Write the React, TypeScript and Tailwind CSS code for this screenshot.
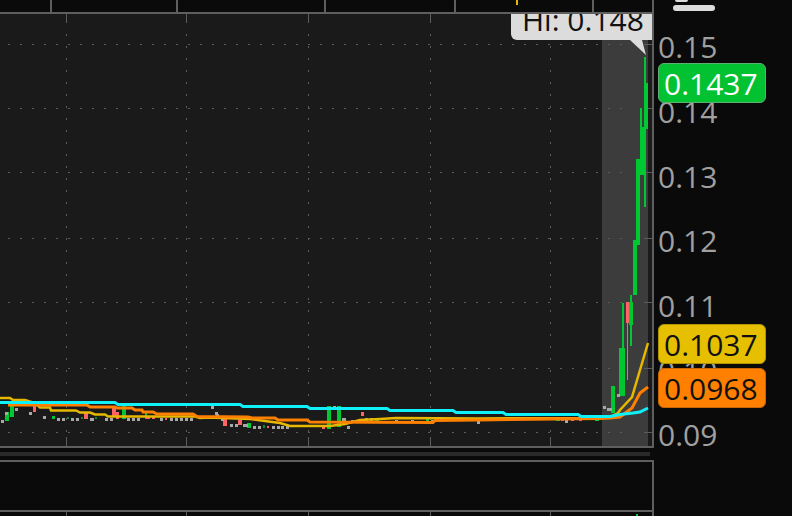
const GREEN = '#00c832'
const RED = '#ff6464'

const gridY = [44, 108, 172, 238, 302, 368, 432]
const gridX = [66, 186, 308, 430, 550]
const topTicks = [50, 176, 324, 454, 592]

// x, y, w, h in page pixels
const candles: [number, number, number, number, string][] = [
  [5, 412, 4, 9, GREEN],
  [10, 406, 4, 11, GREEN],
  [33, 405, 3, 7, RED],
  [52, 416, 3, 3, GREEN],
  [67, 417, 2, 2, '#0a8a2a'],
  [81, 417, 2, 2, '#0a8a2a'],
  [84, 413, 4, 6, RED],
  [95, 417, 2, 2, '#0a8a2a'],
  [112, 408, 4, 8, RED],
  [116, 412, 3, 7, RED],
  [122, 406, 4, 13, GREEN],
  [145, 412, 2, 7, GREEN],
  [146, 416, 4, 3, RED],
  [152, 416, 3, 3, RED],
  [165, 418, 2, 2, RED],
  [223, 418, 4, 8, RED],
  [238, 420, 4, 5, RED],
  [247, 423, 4, 5, GREEN],
  [263, 425, 2, 3, '#0a8a2a'],
  [267, 426, 2, 2, RED],
  [322, 427, 3, 2, RED],
  [327, 406, 4, 23, GREEN],
  [337, 406, 4, 21, GREEN],
  [361, 412, 3, 4, RED],
  [375, 418, 4, 3, GREEN],
  [426, 419, 3, 2, GREEN],
  [556, 419, 4, 2, GREEN],
  [561, 419, 3, 2, RED],
  [571, 419, 3, 2, RED],
  [579, 419, 3, 2, RED],
  [595, 419, 4, 2, GREEN],
  [611, 386, 4, 27, GREEN],
  [619, 348, 6, 48, GREEN],
  [622, 303, 2, 45, GREEN],
  [627, 302, 1, 78, RED],
  [626, 302, 3, 21, RED],
  [630, 295, 2, 51, GREEN],
  [629, 302, 4, 23, GREEN],
  [633, 240, 4, 55, GREEN],
  [636, 159, 4, 86, GREEN],
  [640, 108, 2, 67, GREEN],
  [640, 127, 4, 48, GREEN],
  [644, 57, 2, 150, GREEN],
  [645, 83, 3, 46, GREEN],
]

const dots = [
  [1, 420], [5, 412], [15, 408], [25, 400], [29, 412], [43, 416], [57, 418], [62, 418], [71, 418], [76, 418],
  [90, 418], [91, 418], [105, 418], [110, 418], [127, 418], [132, 418], [137, 418], [160, 418], [170, 418],
  [175, 418], [180, 418], [185, 418], [190, 418], [211, 406], [215, 412], [216, 414], [221, 418], [230, 424],
  [235, 424], [243, 424], [245, 424], [253, 426], [258, 426], [272, 426], [277, 426], [281, 426], [286, 426],
  [333, 406], [342, 418], [343, 418], [347, 426], [351, 420], [355, 420], [365, 418], [370, 418], [395, 420],
  [411, 420], [431, 420], [477, 421], [565, 420], [603, 406], [607, 408], [609, 408], [617, 394],
]

const cyan =
  '0,402.5 115,402.5 118,404.5 240,404.5 243,406.5 307,406.5 310,408.5 387,408.5 390,410.5 453,410.5 456,412.5 503,412.5 506,414.5 578,414.5 581,416.5 610,416.5 620,414.5 633,413 640,412 648,408'
const yellow =
  '0,398 10,398 13,400 25,400 35,403 40,407.5 50,407.5 51,410.5 76,410.5 80,412.5 90,412.5 95,414.5 105,414.5 108,416.5 195,416.5 200,418 208,417.5 250,419 265,421 280,423 290,426 330,426 345,424 360,420 380,419 396,418 477,418.5 600,418 610,417 618,413 620,410 632,397 640,370 648,343'
const orange =
  '8,405 87,405 90,407 115,407 117,408 132,408 135,410 142,410 143,412 153,412 157,414 193,414 197,416.5 248,417 252,418 275,418 278,420 307,420 310,422 433,422.5 435,420.5 477,420 600,418.5 610,418 620,417 632,408 640,393 648,387'

const axisLabels = ['0.15', '0.14', '0.13', '0.12', '0.11', '0.10', '0.09']

const pills = [
  { label: '0.1437', cls: 'top-[51px] bg-[#02c232] border-[#5fae72] text-white' },
  { label: '0.1037', cls: 'top-[312px] bg-[#e6c000] border-[#b09300] text-[#111]' },
  { label: '0.0968', cls: 'top-[356px] bg-[#ff8000] border-[#c96500] text-[#111]' },
]

function range(from: number, to: number, step: number) {
  const out: number[] = []
  for (let v = from; v <= to; v += step) out.push(v)
  return out
}

function ChartCanvas() {
  return (
    <svg width="652" height="432" viewBox="0 14 652 432" className="block">
      <rect x="602" y="14" width="46" height="432" fill="#3c3c3c" />
      {gridY.map((y) => (
        <g key={y} fill="#5c5c5c">
          {range(8, 622, 12).map((x) => (
            <rect key={x} x={x} y={y} width="2" height="1" />
          ))}
          <rect x="644" y={y} width="8" height="1" />
        </g>
      ))}
      {gridX.map((x) => (
        <g key={x} fill="#5c5c5c">
          <rect x={x} y="14" width="1" height="9" />
          {range(34, 430, 12).map((y) => (
            <rect key={y} x={x} y={y} width="1" height="2" />
          ))}
          <rect x={x} y="437" width="1" height="9" />
        </g>
      ))}
      {candles.map(([x, y, w, h, c], i) => (
        <rect key={i} x={x} y={y} width={w} height={h} fill={c} />
      ))}
      {dots.map(([x, y], i) => (
        <rect key={i} x={x} y={y} width="3" height="3" fill="#a8a8a8" />
      ))}
      <polyline points={yellow} fill="none" stroke="#e6b800" strokeWidth="2.5" />
      <polyline points={orange} fill="none" stroke="#ff8000" strokeWidth="3" />
      <polyline points={cyan} fill="none" stroke="#10f0f8" strokeWidth="3" />
    </svg>
  )
}

export default function App() {
  return (
    <div className="w-[792px] h-[516px] overflow-hidden bg-[#0a0a0a] font-['Open_Sans',sans-serif]">
      {/* time ticks above the chart */}
      <div className="relative h-3 w-[654px] border-r-2 border-[#5f5f5f]">
        <svg width="652" height="12" className="block">
          {topTicks.map((x) => (
            <rect key={x} x={x} y="0" width="2" height="12" fill="#5f5f5f" />
          ))}
          <rect x="516" y="0" width="2" height="5" fill="#e6b800" />
        </svg>
      </div>

      <div className="flex h-[436px]">
        <div className="relative w-[654px] shrink-0 overflow-hidden border-y-2 border-r-2 border-[#5f5f5f] bg-[#1a1a1a]">
          <ChartCanvas />
          <div className="absolute top-0 left-[511px] right-0 h-[26px] overflow-hidden rounded-bl-md bg-[#dcdcdc] pl-[11px] text-[30px] leading-[40px] text-[#111]">
            <div className="-mt-[14px] whitespace-nowrap">Hi: 0.148</div>
          </div>
          <svg width="20" height="16" className="absolute top-[26px] left-[628px]">
            <path d="M2 0 L18 15 L14 0 Z" fill="#dcdcdc" />
          </svg>
        </div>

        <div className="relative flex-1 pt-[3px] pl-[4px]">
          {axisLabels.map((label) => (
            <div key={label} className="flex h-[64.67px] items-center text-[30px] leading-none text-[#a0a0a0]">
              {label}
            </div>
          ))}
          {pills.map((p) => (
            <div
              key={p.label}
              className={`absolute left-[4px] flex h-[40px] w-[108px] items-center rounded-md border pt-[1px] pl-[5px] text-[30px] leading-none ${p.cls}`}
            >
              {p.label}
            </div>
          ))}
          {/* study title cut off by the top of the frame */}
          <div className="absolute -top-[12px] left-[19px] flex w-[42px] flex-col items-start">
            <div className="ml-[2px] h-[2px] w-[13px] rounded-b-full bg-[#dcdcdc]" />
            <div className="mt-[3px] h-[6px] w-[42px] rounded-full bg-[#dcdcdc]" />
          </div>
        </div>
      </div>

      <div className="mt-1 h-1 w-[650px] bg-[#2a2a2a]" />

      <div className="mt-1 h-[52px] w-[654px] border-y-2 border-r-2 border-[#5f5f5f] bg-[#0a0a0a]" />

      <div className="h-1 w-[654px] border-r-2 border-[#5f5f5f]">
        <svg width="652" height="4" className="block">
          {gridX.map((x) => (
            <rect key={x} x={x} y="0" width="1" height="4" fill="#5c5c5c" />
          ))}
          <rect x="636" y="2" width="2" height="2" fill={GREEN} />
        </svg>
      </div>
    </div>
  )
}
